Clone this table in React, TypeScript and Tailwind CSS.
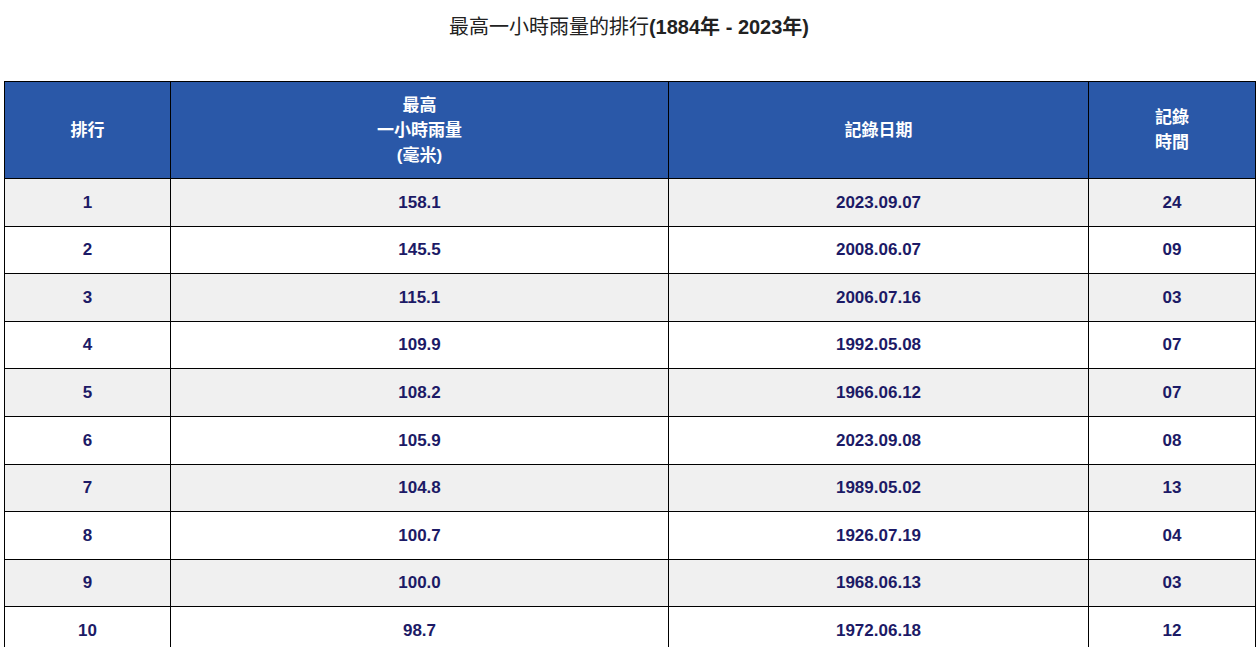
const rows = [
  ["1", "158.1", "2023.09.07", "24"],
  ["2", "145.5", "2008.06.07", "09"],
  ["3", "115.1", "2006.07.16", "03"],
  ["4", "109.9", "1992.05.08", "07"],
  ["5", "108.2", "1966.06.12", "07"],
  ["6", "105.9", "2023.09.08", "08"],
  ["7", "104.8", "1989.05.02", "13"],
  ["8", "100.7", "1926.07.19", "04"],
  ["9", "100.0", "1968.06.13", "03"],
  ["10", "98.7", "1972.06.18", "12"],
];

export default function App() {
  return (
    <div className="min-h-screen bg-white font-['Liberation_Sans','Noto_Sans_CJK_TC',sans-serif]">
      {/* Title */}
      <div className="h-[81px] pt-[15px] text-center text-[20px] leading-[24px] text-[#222]">
        最高一小時雨量的排行<span className="font-bold">(1884年 - 2023年)</span>
      </div>

      {/* Table */}
      <div className="px-[4px]">
        <table className="w-[1251px] border-collapse table-fixed text-center">
          <colgroup>
            <col className="w-[166px]" />
            <col className="w-[498px]" />
            <col className="w-[420px]" />
            <col className="w-[167px]" />
          </colgroup>
          <thead>
            <tr className="h-[97px] bg-[#2a58a8] text-white font-bold text-[17px] leading-[25px]">
              <th className="border border-black">排行</th>
              <th className="border border-black">
                最高
                <br />
                一小時雨量
                <br />
                (毫米)
              </th>
              <th className="border border-black">記錄日期</th>
              <th className="border border-black">
                記錄
                <br />
                時間
              </th>
            </tr>
          </thead>
          <tbody>
            {rows.map((r, i) => (
              <tr
                key={r[0]}
                className={`h-[47.6px] text-[17px] font-bold text-[#1c1a66] ${
                  i % 2 === 0 ? "bg-[#f0f0f0]" : "bg-white"
                }`}
              >
                {r.map((c, j) => (
                  <td key={j} className="border border-black">
                    {c}
                  </td>
                ))}
              </tr>
            ))}
          </tbody>
        </table>
      </div>
    </div>
  );
}
